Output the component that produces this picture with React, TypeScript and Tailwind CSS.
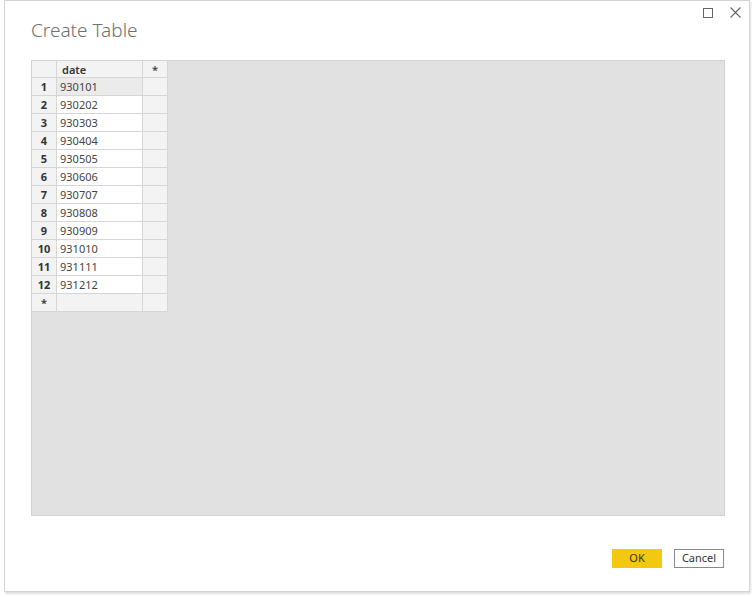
import React from "react";

const rows = [
  "930101",
  "930202",
  "930303",
  "930404",
  "930505",
  "930606",
  "930707",
  "930808",
  "930909",
  "931010",
  "931111",
  "931212",
];

const cell = "h-[18px] border-r border-b border-[#d6d6d6] leading-[17px]";

const App = () => {
  return (
    <div className="h-[597px] w-[752px] overflow-hidden bg-white font-['Noto_Sans',sans-serif]">
      <div className="ml-[4px] flex h-[592px] w-[746px] flex-col border border-[#d4d4d4] bg-white shadow-[1px_2px_2px_rgba(0,0,0,0.12)]">
        <div className="flex h-[55px] items-start justify-between">
          <h1 className="ml-[26px] mt-[16px] text-[19px] font-light leading-[26px] text-[#707070]">
            Create Table
          </h1>
          <div className="mr-[8px] mt-[6px] flex items-center gap-[17px] text-[#666666]">
            <svg width="10" height="10" viewBox="0 0 10 10" className="mt-[1px]">
              <rect x="0.5" y="0.5" width="9" height="9" fill="none" stroke="currentColor" strokeWidth="1" />
            </svg>
            <svg width="11" height="11" viewBox="0 0 11 11">
              <path d="M0.5 0.5 L10.5 10.5 M10.5 0.5 L0.5 10.5" stroke="currentColor" strokeWidth="1.1" />
            </svg>
          </div>
        </div>

        <div className="ml-[26px] mt-[4px] h-[456px] w-[694px] border border-[#d2d2d2] bg-[#e1e1e1]">
          <div className="flex w-[136px] flex-col bg-white text-[11px] text-[#444444]">
            <div className="flex">
              <div className={`${cell} !h-[17px] w-[25px] bg-[#f3f3f3]`} />
              <div className={`${cell} !h-[17px] w-[86px] bg-[#f3f3f3] pl-[5px] font-semibold text-[#333333]`}>
                date
              </div>
              <div className={`${cell} !h-[17px] w-[25px] bg-[#f3f3f3] text-center font-semibold`}>*</div>
            </div>
            {rows.map((v, i) => (
              <div className="flex" key={i}>
                <div className={`${cell} w-[25px] bg-[#f3f3f3] text-center font-bold text-[#333333]`}>
                  {i + 1}
                </div>
                <div className={`${cell} w-[86px] pl-[3px] ${i === 0 ? "bg-[#ebebeb]" : "bg-white"}`}>
                  {v}
                </div>
                <div className={`${cell} w-[25px] bg-[#f3f3f3]`} />
              </div>
            ))}
            <div className="flex">
              <div className={`${cell} w-[25px] bg-[#f3f3f3] text-center font-bold`}>*</div>
              <div className={`${cell} w-[86px] bg-[#f3f3f3]`} />
              <div className={`${cell} w-[25px] bg-[#f3f3f3]`} />
            </div>
          </div>
        </div>

        <div className="mr-[25px] mt-[33px] flex justify-end gap-[12px] text-[11px]">
          <button className="h-[19px] w-[50px] bg-[#f2c811] text-[#333333]">OK</button>
          <button className="h-[19px] w-[50px] border border-[#8a8a8a] bg-white text-[#333333]">
            Cancel
          </button>
        </div>
      </div>
    </div>
  );
};

export default App;
